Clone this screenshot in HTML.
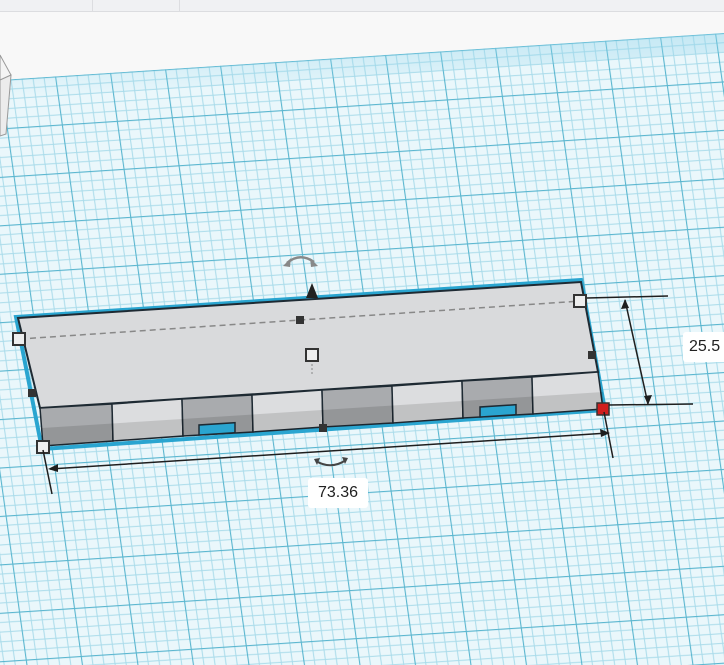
<!DOCTYPE html>
<html><head><style>
html,body{margin:0;padding:0;width:724px;height:665px;overflow:hidden;background:#f8f8f8;font-family:"Liberation Sans",sans-serif}
.top{position:absolute;left:0;top:0;width:724px;height:11px;background:#f0f1f3;border-bottom:1px solid #dcdde0}
.lbl{position:absolute;background:#fff;border-radius:3px;font-size:16px;color:#222;text-align:center;line-height:30px;height:30px}
</style></head><body>
<div class="top"><div style="position:absolute;left:92px;top:0;width:1px;height:11px;background:#dcdde0"></div><div style="position:absolute;left:179px;top:0;width:1px;height:11px;background:#dcdde0"></div></div>
<svg width="724" height="665" style="position:absolute;left:0;top:0" xmlns="http://www.w3.org/2000/svg">
<defs>
<pattern id="g" width="55" height="48" patternUnits="userSpaceOnUse" patternTransform="matrix(1,-0.065,0.14,1,0,80)">
<rect width="55" height="48" fill="#eaf7fb"/>
<g stroke="#a9dbea" stroke-width="1">
<path d="M11 0V48M22 0V48M33 0V48M44 0V48M0 9.6H55M0 19.2H55M0 28.8H55M0 38.4H55"/>
</g>
<path d="M0.5 0V48M0 0.5H55" stroke="#5ab6cf" stroke-width="1.2"/>
</pattern>
<linearGradient id="fd" x1="0" y1="0" x2="0" y2="1"><stop offset="0" stop-color="#8fd3ea" stop-opacity=".7"/><stop offset="1" stop-color="#8fd3ea" stop-opacity="0"/></linearGradient>
<clipPath id="c"><polygon points="0,80 724,33 724,665 0,665"/></clipPath>
</defs>
<polygon points="0,80 724,33 724,665 0,665" fill="url(#g)"/>
<polygon points="0,80 724,33 724,52 0,100" fill="url(#fd)" opacity=".6"/>
<!-- cube -->
<polygon points="0,55 11,75 0,80" fill="#f4f4f4" stroke="#999" stroke-width="1"/>
<polygon points="0,80 11,75 6,134 0,136" fill="#ececec" stroke="#999" stroke-width="1"/>
<!-- object outline highlight -->
<polygon points="16,317 581,280 605,410 42,449" fill="none" stroke="#2aa5d0" stroke-width="4"/>
<!-- top face -->
<polygon points="18,318 581,282 598,372 40,408" fill="#d9dadc" stroke="#1e2a33" stroke-width="2"/>
<!-- front face segments -->
<g stroke="#1e2a33" stroke-width="1.5">
<polygon points="40,408 112,404 113,441 43,446" fill="#a9abae"/>
<polygon points="112,404 182,399 183,436 113,441" fill="#dcdddf"/>
<polygon points="182,399 252,395 253,432 183,436" fill="#a9abae"/>
<polygon points="252,395 322,390 323,427 253,432" fill="#dcdddf"/>
<polygon points="322,390 392,386 393,423 323,427" fill="#a9abae"/>
<polygon points="392,386 462,381 463,418 393,423" fill="#dcdddf"/>
<polygon points="462,381 532,377 533,414 463,418" fill="#a9abae"/>
<polygon points="532,377 598,372 603,409 533,414" fill="#dcdddf"/>
</g>
<!-- lower darker band -->
<polygon points="42,428 603,392 603,409 43,446" fill="#000" opacity=".12"/>
<!-- notches -->
<rect x="199" y="425" width="36" height="10" fill="#2aa5d0" stroke="#1e2a33" stroke-width="1.5" transform="skewY(-3.7)" transform-origin="199 430"/>
<rect x="480" y="407" width="36" height="10" fill="#2aa5d0" stroke="#1e2a33" stroke-width="1.5" transform="skewY(-3.7)" transform-origin="480 412"/>
<!-- dashed center line -->
<line x1="20" y1="339" x2="581" y2="301" stroke="#888" stroke-width="1.5" stroke-dasharray="6,4"/>
<line x1="312" y1="360" x2="312" y2="375" stroke="#888" stroke-width="1" stroke-dasharray="2,2"/>
<!-- handles -->
<rect x="13" y="333" width="12" height="12" fill="#eee" stroke="#333" stroke-width="2"/>
<rect x="574" y="295" width="12" height="12" fill="#eee" stroke="#333" stroke-width="2"/>
<rect x="37" y="441" width="12" height="12" fill="#eee" stroke="#333" stroke-width="2"/>
<rect x="306" y="349" width="12" height="12" fill="#eee" stroke="#333" stroke-width="2"/>
<rect x="597" y="403" width="12" height="12" fill="#d01e1e" stroke="#333" stroke-width="1.5"/>
<rect x="296" y="316" width="8" height="8" fill="#333"/>
<rect x="588" y="351" width="8" height="8" fill="#333"/>
<rect x="28" y="389" width="8" height="8" fill="#333"/>
<rect x="319" y="424" width="8" height="8" fill="#333"/>
<polygon points="312,283 306,298 318,298" fill="#222"/>
<!-- rotate arrows -->
<path d="M287 263 Q300 252 314 262" fill="none" stroke="#888" stroke-width="2.5"/>
<polygon points="283,266 291,258 290,267" fill="#888"/>
<polygon points="318,266 310,258 311,267" fill="#888"/>
<path d="M316 461 Q331 470 346 460" fill="none" stroke="#444" stroke-width="2"/>
<polygon points="314,459 320,458 317,465" fill="#444"/>
<polygon points="348,458 342,457 345,464" fill="#444"/>
<!-- dimensions -->
<g stroke="#1e1e1e" stroke-width="1.5" fill="none">
<line x1="43" y1="450" x2="52" y2="494"/>
<line x1="604" y1="412" x2="613" y2="458"/>
<line x1="50" y1="469" x2="608" y2="433"/>
<line x1="587" y1="298" x2="668" y2="296"/>
<line x1="609" y1="405" x2="693" y2="404"/>
<line x1="625" y1="300" x2="648" y2="404"/>
</g>
<polygon points="48,469 58,464 58,472" fill="#1e1e1e"/>
<polygon points="610,433 600,429 601,437" fill="#1e1e1e"/>
<polygon points="625,299 621,309 629,308" fill="#1e1e1e"/>
<polygon points="648,405 644,396 652,395" fill="#1e1e1e"/>
</svg>
<div class="lbl" style="left:308px;top:478px;width:60px">73.36</div>
<div class="lbl" style="left:683px;top:332px;width:50px;text-align:left;padding-left:6px">25.5</div>
</body></html>
